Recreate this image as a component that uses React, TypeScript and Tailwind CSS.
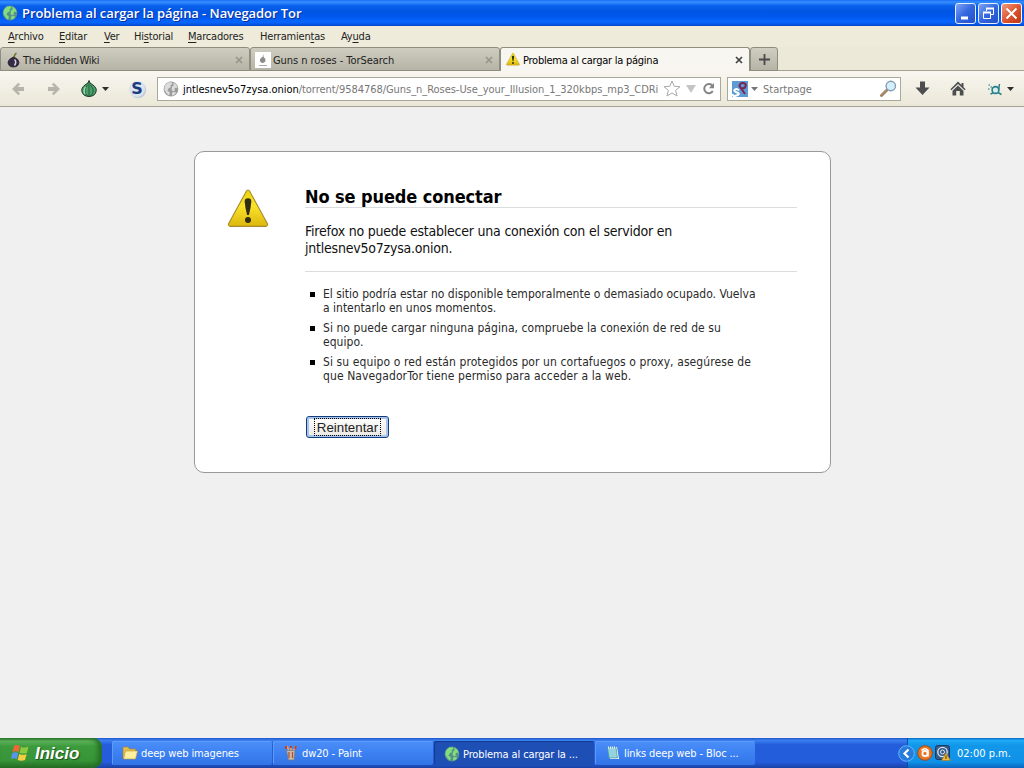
import type { ReactNode } from "react";

const MENU = [
  { before: "", key: "A", after: "rchivo", className: "w-[51px]" },
  { before: "", key: "E", after: "ditar", className: "w-[45px]" },
  { before: "", key: "V", after: "er", className: "w-[30px]" },
  { before: "Hi", key: "s", after: "torial", className: "w-[54px]" },
  { before: "", key: "M", after: "arcadores", className: "w-[72px]" },
  { before: "Herramien", key: "t", after: "as", className: "w-[81px]" },
  { before: "Ay", key: "u", after: "da", className: "w-[50px]" },
];

const REASONS = [
  {
    lines: [
      "El sitio podría estar no disponible temporalmente o demasiado ocupado. Vuelva",
      "a intentarlo en unos momentos.",
    ],
    className: "tracking-normal",
  },
  {
    lines: ["Si no puede cargar ninguna página, compruebe la conexión de red de su", "equipo."],
    className: "tracking-[0.06px]",
  },
  {
    lines: [
      "Si su equipo o red están protegidos por un cortafuegos o proxy, asegúrese de",
      "que NavegadorTor tiene permiso para acceder a la web.",
    ],
    className: "tracking-[0.1px]",
  },
];

function Globe({ gray = false }: { gray?: boolean }) {
  return (
    <svg width="16" height="16" viewBox="0 0 16 16" className="shrink-0" aria-hidden="true">
      <circle cx="8" cy="8" r="7.4" fill={gray ? "#9b9b9b" : "#5b8f8a"} />
      <path
        d="M2 4.5 5 1.6l3.5-.4 1 1.6-2 1.4.4 1.8-2.4 1.5-1 2.2 2 1.2.3 2-1.3 1.6L3 11.5 1.3 8.6ZM10.5 1.6l3 2.4 1.3 3.4-1.8-.8-1.5.8.4 2.2-1.8.8-1.6-2 .5-2.6 1.6-1.4ZM9 11.5l2.6-.6 1.6.9-1.8 2-2.2 1Z"
        fill={gray ? "#dcdcdc" : "#7fe07c"}
      />
    </svg>
  );
}

function Warning({ size, className = "" }: { size: number; className?: string }) {
  return (
    <svg width={size} height={size} viewBox="0 0 42 42" className={`shrink-0 ${className}`} aria-hidden="true">
      <defs>
        <linearGradient id="warn" x1="0" y1="0" x2="0" y2="1">
          <stop offset="0" stopColor="#e9d30f" />
          <stop offset=".45" stopColor="#fae32a" />
          <stop offset="1" stopColor="#dcb60c" />
        </linearGradient>
      </defs>
      <path
        d="M19.3 4.3Q21 1.6 22.7 4.3L40.3 36.5Q41.3 39.2 38.5 39.4H3.5Q.7 39.2 1.7 36.5Z"
        fill="url(#warn)"
        stroke="#a88a2c"
        strokeWidth="1.1"
      />
      <path d="M17.7 14.5Q17.7 11.2 21 11.2T24.3 14.5Q24 20 21.9 28H20.1Q18 20 17.7 14.5Z" fill="#302c16" />
      <circle cx="21" cy="33" r="3" fill="#302c16" />
    </svg>
  );
}

function Caret({ className, big = false }: { className: string; big?: boolean }) {
  return (
    <svg width={big ? 10 : 7} height={big ? 8 : 4} viewBox="0 0 8 5" preserveAspectRatio="none" className={className} aria-hidden="true">
      <path d="M0 0H8L4 5Z" fill="currentColor" />
    </svg>
  );
}

function Close({ className }: { className: string }) {
  return (
    <svg width="8" height="8" viewBox="0 0 8 8" className={`mr-[6px] ${className}`} aria-hidden="true">
      <path d="M1 1 7 7M7 1 1 7" stroke="currentColor" strokeWidth="1.7" />
    </svg>
  );
}

function Arrow({ className }: { className: string }) {
  return (
    <svg width="14" height="14" viewBox="0 0 14 14" className={className} aria-hidden="true">
      <path d="M7.3.8 1 7l6.3 6.2 1.8-1.8L6.600 8.900H13V5.100H6.600L9.100 2.600Z" fill="#b7b5ab" />
    </svg>
  );
}

function WindowButton({ children, close = false }: { children: ReactNode; close?: boolean }) {
  return (
    <button
      className={
        close
          ? "flex h-[21px] w-[21px] items-center justify-center rounded-[3px] border border-white bg-linear-to-br from-[#ed9a7e] via-[#dc5631] to-[#bd3510]"
          : "flex h-[21px] w-[21px] items-center justify-center rounded-[3px] border border-[#e5eeff] bg-linear-to-br from-[#7fa3f5] via-[#3366df] to-[#2450c8]"
      }
    >
      <svg width="17" height="17" viewBox="0 0 17 17" fill="none" stroke="#fff" aria-hidden="true">
        {children}
      </svg>
    </button>
  );
}

function TitleBar() {
  return (
    <header className="flex h-[26px] items-center bg-[linear-gradient(180deg,#1c6df5_0,#358fff_8%,#0a62ec_22%,#0055e3_45%,#0058ee_65%,#0767ff_85%,#0048cc_100%)] pl-[2px] pr-[2px]">
      <Globe />
      <h1 className="ml-1 grow whitespace-nowrap pt-[1px] font-['Open_Sans','Noto_Sans',sans-serif] text-[13px] font-semibold tracking-[-0.07px] text-white [text-shadow:1px_1px_0_#0b2f9b]">
        Problema al cargar la página - Navegador Tor
      </h1>
      <div className="flex gap-[2px]">
        <WindowButton>
          <path d="M4 13H11" strokeWidth="3" />
        </WindowButton>
        <WindowButton>
          <path d="M6.5 6V3.5H13.5V9.5H11" />
          <path d="M6 3.5H14" strokeWidth="2" />
          <path d="M3.5 7.5H10.5V13.5H3.5Z" />
          <path d="M3 7.5H11" strokeWidth="2" />
        </WindowButton>
        <WindowButton close>
          <path d="M3.5 3.5 13.5 13.5M13.5 3.5 3.5 13.5" strokeWidth="2" />
        </WindowButton>
      </div>
    </header>
  );
}

function MenuBar() {
  return (
    <nav className="flex h-[21px] items-center bg-[#eeebdb] pl-2 pt-[2px] text-[11px] text-[#222]">
      {MENU.map((m) => (
        <span key={m.key} className={`${m.className} whitespace-nowrap tracking-[-0.2px]`}>
          {m.before}
          <u className="underline-offset-2">{m.key}</u>
          {m.after}
        </span>
      ))}
    </nav>
  );
}

function Tabs() {
  return (
    <div className="flex h-6 bg-[#ece9d9] text-[11px] text-[#222] shadow-[inset_0_-1px_0_#a3a08f]">
      <div className="flex w-[250px] items-center rounded-t-[3px] border border-[#8f8d80] bg-linear-to-b from-[#cfcdbf] to-[#b6b4a7] pl-[5px] pt-[2px]">
        <svg width="16" height="16" viewBox="0 0 16 16" className="shrink-0" aria-hidden="true">
          <path d="M8 5.5Q8.5 2 10.5 1" stroke="#6c7d2c" fill="none" strokeWidth="1.7" />
          <path d="M7.5 5Q13 7 13 10.5 12.5 15 7.5 15T2 10.5Q2.2 7 7.5 5Z" fill="#372b45" stroke="#1d1822" strokeWidth=".7" />
          <path d="M8.500 7.500Q11 10 8.500 13.500" fill="none" stroke="#d8cfe2" strokeWidth="1.500" />
        </svg>
        <span className="ml-[1px] grow pt-[2px] tracking-[-0.3px]">The Hidden Wiki</span>
        <Close className="text-[#97958a]" />
      </div>
      <div className="flex w-[250px] items-center rounded-t-[3px] border border-[#8f8d80] bg-linear-to-b from-[#cfcdbf] to-[#b6b4a7] pl-[4px] pt-[2px]">
        <span className="flex size-4 items-center justify-center bg-white">
          <svg width="10" height="14" viewBox="0 0 10 14" aria-hidden="true">
            <path d="M4.5 4 6 1 5.5 4Q8 5.5 7.5 8 6.5 10 4.5 10T2 8Q1.5 5.5 4.5 4Z" fill="#8c8c8c" />
            <path d="M1 12.5H9" stroke="#aaa" />
          </svg>
        </span>
        <span className="ml-[2px] grow pt-[3px] tracking-[-0.05px]">Guns n roses - TorSearch</span>
        <Close className="text-[#97958a]" />
      </div>
      <div className="flex w-[250px] items-center rounded-t-[3px] border border-b-0 border-[#8f8d80] bg-[#f8f6f0] pl-[5px] pt-[1px]">
        <Warning size={14} className="-mt-[2px]" />
        <span className="ml-[3px] grow pt-[3px] tracking-[-0.25px] text-black">Problema al cargar la página</span>
        <Close className="text-[#444]" />
      </div>
      <div className="flex w-7 items-center justify-center rounded-t-[3px] border border-[#8f8d80] bg-linear-to-b from-[#d0cec0] to-[#b6b4a7]">
        <svg width="11" height="11" viewBox="0 0 11 11" aria-hidden="true">
          <path d="M5.5 0V11M0 5.5H11" stroke="#494949" strokeWidth="1.8" />
        </svg>
      </div>
    </div>
  );
}

function NavBar() {
  return (
    <div className="flex h-9 items-center border-b border-[#a5a293] bg-linear-to-b from-[#f8f6ef] to-[#ebe8d8] text-[11px]">
      <Arrow className="ml-[11px]" />
      <Arrow className="ml-[22px] rotate-180" />
      <svg width="16" height="17" viewBox="0 0 16 17" className="ml-[20px]" aria-hidden="true">
        <path d="M8 .5 9 3Q15.5 6.5 15.3 10.5 14.5 16.3 8 16.5 1.5 16.3.7 10.5.5 6.5 7 3Z" fill="#4c9f6c" stroke="#1c3427" />
        <path d="M8 3V16M6.5 5Q1 11 6.5 16M9.5 5Q15 11 9.5 16" fill="none" stroke="#1d5937" strokeWidth=".9" />
        <path d="M4.5 7Q2 11 4 14" fill="none" stroke="#a5dab3" strokeWidth="1.3" />
      </svg>
      <Caret className="ml-[5px] text-[#2e2e2e]" />
      <div className="ml-[20px] flex size-4 items-center justify-center rounded-full bg-[#dbe3ee] pt-[1px] font-['DejaVu_Sans',sans-serif] text-[16px] font-bold leading-none text-[#173b7e] shadow-[1px_1px_1px_#bcc5d2]">
        S
      </div>
      <div className="ml-[12px] flex h-6 w-[564px] items-center border border-[#aaa89b] bg-white pl-[5px]">
        <Globe gray />
        <div className="ml-[4px] w-[476px] shrink-0 whitespace-nowrap pt-[3px] tracking-[-0.04px] text-[#777]">
          <span className="text-black">jntlesnev5o7zysa.onion</span>/torrent/9584768/Guns_n_Roses-Use_your_Illusion_1_320kbps_mp3_CDRi
        </div>
        <svg width="18" height="17" viewBox="0 0 18 17" className="ml-1 shrink-0" aria-hidden="true">
          <path d="m9 1 2.2 5.3 5.8.4-4.4 3.7 1.4 5.6L9 13l-5 3 1.4-5.6L1 6.7l5.8-.4Z" fill="#fff" stroke="#aaa" />
        </svg>
        <Caret big className="ml-[5px] mr-[6px] shrink-0 text-[#c5c5c5]" />
        <svg width="13" height="13" viewBox="0 0 13 13" className="shrink-0" aria-hidden="true">
          <path d="M10.5 3.8A4.6 4.6 0 1 0 10.8 9" fill="none" stroke="#858585" strokeWidth="2" />
          <path d="M12 1V6.2H6.8Z" fill="#858585" />
        </svg>
      </div>
      <div className="ml-[6px] flex h-6 w-[174px] items-center border border-[#aaa89b] bg-white pl-[4px]">
        <svg width="16" height="16" viewBox="0 0 16 16" aria-hidden="true">
          <path d="M0 0H16V16H0Z" fill="#5c9bd4" />
          <path d="M7 9.5Q5 7 3 8.500T5 11.500 4.500 14.500 1 13" fill="none" stroke="#fff" strokeWidth="1.9" />
          <path d="M13 13 7.5 5Q8 1.5 11.5 2T13 6.5L9.5 8" fill="none" stroke="#7c2450" strokeWidth="2" />
        </svg>
        <Caret className="ml-[3px] text-[#777]" />
        <span className="ml-[5px] grow pt-[3px] text-[#777]">Startpage</span>
        <svg width="17" height="17" viewBox="0 0 17 17" className="mr-[3px]" aria-hidden="true">
          <path d="M1.5 15.5 7 10" stroke="#a6866b" strokeWidth="3" strokeLinecap="round" />
          <circle cx="10.8" cy="6" r="4.7" fill="#d3effc" stroke="#849cb0" strokeWidth="1.4" />
        </svg>
      </div>
      <svg width="15" height="15" viewBox="0 0 15 15" className="ml-[14px]" aria-hidden="true">
        <path d="M5 .5H10V6.5H14.5L7.5 14 .5 6.5H5Z" fill="#4c4e50" />
      </svg>
      <svg width="16" height="15" viewBox="0 0 16 15" className="ml-[20px]" aria-hidden="true">
        <path d="M8 .5 11.5 4V2H13.5V6L15.6 8.2 14.6 9.3 8 3 1.4 9.3.4 8.2Z" fill="#4c4e50" />
        <path d="M8 4.5 13.5 9.7V14.5H9.8V10H6.2V14.5H2.5V9.7Z" fill="#4c4e50" />
      </svg>
      <svg width="16" height="16" viewBox="0 0 16 16" className="ml-[21px]" aria-hidden="true">
        <circle cx="8.5" cy="9" r="3.4" fill="#d5edeb" stroke="#247f87" strokeWidth="1.6" />
        <path d="M11.5 9 12.5 3M11 11.5 14.5 13.5M6 12 3.5 13" fill="none" stroke="#247f87" strokeWidth="1.5" />
        <path d="M1.5 4H3M1 8H2.5M3.5 6H5" stroke="#5c9ba0" strokeWidth="1.4" />
      </svg>
      <Caret className="ml-[4px] text-[#2e2e2e]" />
    </div>
  );
}

function ErrorPage() {
  return (
    <main className="grow bg-[#f0f0f0] pl-[194px] pt-[44px]">
      <section className="flex h-[322px] w-[637px] rounded-[10px] border border-[#999] bg-white pl-[32px] pt-[35px]">
        <Warning size={42} />
        <div className="ml-[36px] w-[492px]">
          <h2 className="h-[21px] whitespace-nowrap border-b border-[#d9dddd] text-[18px] font-bold leading-[19px] tracking-[-0.1px] text-black">
            No se puede conectar
          </h2>
          <p className="mt-[15px] h-[49px] whitespace-nowrap border-b border-[#d9dddd] text-[14px] leading-[17px] tracking-[-0.22px] text-[#111]">
            Firefox no puede establecer una conexión con el servidor en
            <br />
            jntlesnev5o7zysa.onion.
          </p>
          <ul className="mt-[15px] space-y-[6px] text-[12px] leading-[14px] text-[#2a2a2a]">
            {REASONS.map((reason) => (
              <li key={reason.lines[0]} className="flex whitespace-nowrap">
                <span className="ml-[5px] mr-[8px] mt-[5px] size-[5px] bg-black" />
                <span className={reason.className}>
                  {reason.lines[0]}
                  <br />
                  {reason.lines[1]}
                </span>
              </li>
            ))}
          </ul>
          <button className="ml-[1px] mt-[33px] flex h-[22px] w-[83px] items-center justify-center rounded-[3px] border border-[#123f7b] bg-linear-to-b from-white to-[#e9e8e2] shadow-[inset_0_0_0_2px_#a9c5ef]">
            <span className="flex h-[18px] w-[67px] items-center justify-center border border-dotted border-black pt-[2px] font-['Liberation_Sans',sans-serif] text-[13.3px] text-[#222]">
              Reintentar
            </span>
          </button>
        </div>
      </section>
    </main>
  );
}

function Task({ icon, label, active = false }: { icon: ReactNode; label: string; active?: boolean }) {
  return (
    <div
      className={
        active
          ? "flex h-6 w-[160px] items-center gap-[3px] rounded-[2px] bg-[#1e4fb5] pl-[10px] pt-[2px] shadow-[inset_1px_1px_1px_#133a8c]"
          : "flex h-6 w-[160px] items-center gap-[3px] rounded-[2px] bg-linear-to-b from-[#4d8ff7] via-[#3c81f3] to-[#3374e6] pl-[10px] shadow-[inset_1px_1px_0_#5c9bfa]"
      }
    >
      {icon}
      <span className="whitespace-nowrap pt-[2px] tracking-[-0.12px]">{label}</span>
    </div>
  );
}

function Taskbar() {
  return (
    <footer className="flex h-[30px] items-center bg-[linear-gradient(180deg,#2157c9_0,#3a80f0_8%,#245edb_22%,#245cdb_80%,#1a42a5_100%)] text-[11px] text-white">
      <button className="flex h-[30px] w-[102px] items-center rounded-r-[9px] bg-[linear-gradient(180deg,#2f7e2f_0,#5fb45c_10%,#3c9a3c_28%,#379437_75%,#246d24_100%)] pl-[11px] shadow-[inset_-4px_0_5px_#256e25]">
        <svg width="19" height="18" viewBox="0 0 19 18" aria-hidden="true">
          <path d="M3 2Q6 0 9 2L7.5 8Q5 6.5 1.5 8Z" fill="#ef6636" />
          <path d="M10 2.7Q13.5 4.5 17.5 2.5L16 8.7Q12 10.5 8.5 8.7Z" fill="#8acb3e" />
          <path d="M1.2 9.2Q4.5 7.5 7.2 9.2L5.7 15.2Q3 13.5 0 15Z" fill="#5b94ef" />
          <path d="M8.2 9.9Q12 11.7 15.7 9.9L14 16Q10.5 17.5 6.7 16Z" fill="#f6ce40" />
        </svg>
        <span className="ml-[5px] font-['Liberation_Sans',sans-serif] text-[17px] font-bold italic leading-none [text-shadow:1px_1px_1px_#1d4f1d]">
          Inicio
        </span>
      </button>
      <div className="ml-[10px] flex grow gap-[1px]">
        <Task
          label="deep web imagenes"
          icon={
            <svg width="16" height="16" viewBox="0 0 16 16" aria-hidden="true">
              <path d="M1 3Q1 2 2 2H6L7.5 4H13.5V13H1Z" fill="#e3bd4d" stroke="#ab8325" strokeWidth=".6" />
              <path d="M3.5 6H15.5L13.5 14H1.5Z" fill="#fff0a0" stroke="#c19a36" strokeWidth=".6" />
            </svg>
          }
        />
        <Task
          label="dw20 - Paint"
          icon={
            <svg width="16" height="16" viewBox="0 0 16 16" aria-hidden="true">
              <path d="m4 1 3 7M8 1V8M13 1 9 8" stroke="#dba16a" strokeWidth="1.9" />
              <path d="M3 1V4M8 1V3M13 1 12 4" stroke="#be3f37" strokeWidth="2" />
              <path d="M3.5 5.5H12L11 15H5.5Z" fill="#c9b9ae" stroke="#777" strokeWidth=".7" />
              <path d="M6 7V13M9.500 7V13" stroke="#b5532f" fill="none" strokeWidth="1.3" />
            </svg>
          }
        />
        <Task active label="Problema al cargar la ..." icon={<Globe />} />
        <Task
          label="links deep web - Bloc ..."
          icon={
            <svg width="16" height="16" viewBox="0 0 16 16" aria-hidden="true">
              <path d="M3 2H12L14 14H5Z" fill="#fff" />
              <path d="M2.5 2.5H11L12.5 13H4Z" fill="#92d4dc" stroke="#438c9c" strokeWidth=".7" />
              <path d="M3 2.5H11" stroke="#eee" strokeDasharray="1 1" strokeWidth="2" />
            </svg>
          }
        />
      </div>
      <div className="flex h-full w-[117px] items-center bg-[linear-gradient(180deg,#0b67c5_0,#1eaaf6_8%,#1197e9_25%,#0f91e8_80%,#0c65bd_100%)] shadow-[inset_1px_0_0_#0b4ea7]">
        <svg width="17" height="17" viewBox="0 0 17 17" className="-ml-[9px]" aria-hidden="true">
          <circle cx="8.5" cy="8.5" r="7.8" fill="#277bdd" stroke="#65b9fa" />
          <path d="M10.5 4.5 6.5 8.5l4 4" fill="none" stroke="#fff" strokeWidth="2.2" />
        </svg>
        <svg width="16" height="16" viewBox="0 0 16 16" className="ml-[2px]" aria-hidden="true">
          <circle cx="8" cy="8" r="7.3" fill="#e87824" stroke="#a84612" />
          <circle cx="8" cy="8.5" r="2.6" fill="none" stroke="#fff" strokeWidth="1.8" />
          <path d="M4.5 5.500Q8 2 11 5.500V11.500" fill="none" stroke="#fff" strokeWidth="1.600" />
        </svg>
        <svg width="16" height="16" viewBox="0 0 16 16" className="ml-[2px]" aria-hidden="true">
          <rect x=".5" y=".5" width="14" height="14" rx="2" fill="#345b88" stroke="#183b69" />
          <circle cx="7.5" cy="7" r="4.7" fill="none" stroke="#dce9f6" strokeWidth="1.3" />
          <circle cx="7.5" cy="7" r="2" fill="none" stroke="#dce9f6" />
          <path d="m11 8 4.5 7.5h-9Z" fill="#f2ba3a" stroke="#a6771d" strokeWidth=".6" />
          <path d="M11 10.5V14" stroke="#413414" />
        </svg>
        <span className="ml-[6px] whitespace-nowrap pt-[2px]">02:00 p.m.</span>
      </div>
    </footer>
  );
}

export default function App() {
  return (
    <div className="flex h-[768px] w-[1024px] flex-col overflow-hidden font-['DejaVu_Sans_Condensed','DejaVu_Sans',sans-serif]">
      <TitleBar />
      <MenuBar />
      <Tabs />
      <NavBar />
      <ErrorPage />
      <Taskbar />
    </div>
  );
}
